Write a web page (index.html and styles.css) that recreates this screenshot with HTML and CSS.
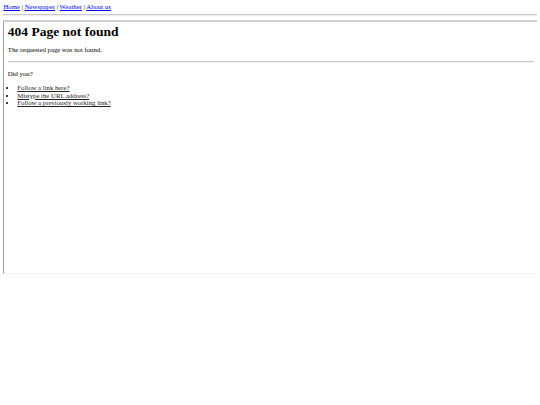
FILE: index.html
```html
<!DOCTYPE html>
<html>
<head>
<meta charset="utf-8">
<title>404 Page not found</title>
<link rel="stylesheet" href="styles.css">
</head>
<body class="page">
<div class="nav"><a href="#">Home</a> | <a href="#">Newspaper</a> | <a href="#">Weather</a> | <a href="#">About us</a></div>
<hr class="rule">
<div class="frame">
  <h1 class="title">404 Page not found</h1>
  <p class="text">The requested page was not found.</p>
  <hr class="inner-rule">
  <p class="text">Did you?</p>
  <ul class="options">
    <li><a href="#">Follow a link here?</a></li>
    <li><a href="#">Mistype the URL address?</a></li>
    <li><a href="#">Follow a previously working link?</a></li>
  </ul>
</div>
</body>
</html>
```
FILE: styles.css
```css
html { background: #fff; }
.page {
  margin: 3.4px;
  font-family: "Liberation Serif", "Times New Roman", serif;
  font-size: 6.75px;
  line-height: 7.7px;
  color: #000;
}
.nav a { color: #0000ee; text-decoration: underline; }
.rule {
  margin: 3.4px 0;
  border: 0;
  border-top: 1px solid #c8c8c8;
  border-bottom: 1px solid #efefef;
  height: 0;
}
.frame {
  margin-right: -1.8px;
  height: 251px;
  padding: 0 3.4px;
  border-top: 2px solid #d2d2d2;
  border-left: 1px solid #9c9c9c;
  border-right: 1px solid #eeeeee;
  border-bottom: 1px solid #efefef;
  overflow: hidden;
  display: flow-root;
}
.title {
  font-size: 13.5px;
  line-height: 15.5px;
  font-weight: bold;
  margin: 2px 0 7px;
}
.text { margin: 6.75px 0; }
.inner-rule {
  margin: 6.75px 0;
  border: 0;
  border-top: 1px solid #c8c8c8;
  border-bottom: 1px solid #efefef;
  height: 0;
}
.options {
  margin: 6.75px 0;
  padding-left: 9.5px;
}
.options a { color: #222; text-decoration: underline; }
```
